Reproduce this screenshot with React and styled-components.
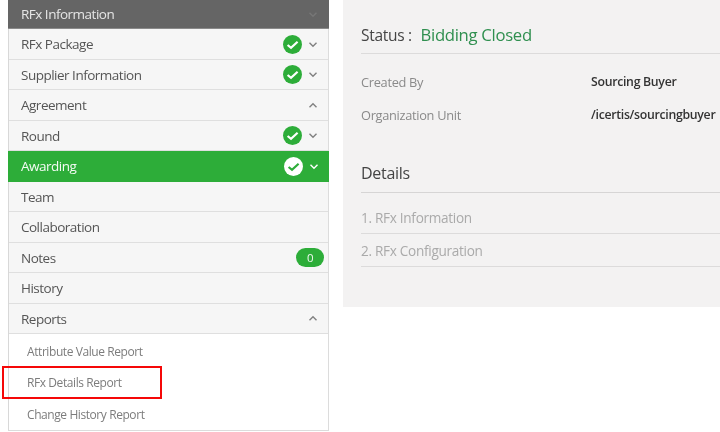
import React from 'react';
import styled, { createGlobalStyle } from 'styled-components';

const GlobalStyle = createGlobalStyle`
  html, body {
    margin: 0;
    padding: 0;
    background: #fff;
    overflow: hidden;
  }
  body {
    font-family: "Open Sans", "Noto Sans", sans-serif;
  }
`;

const Page = styled.div`
  width: 720px;
  height: 432px;
  display: flex;
  align-items: flex-start;
  overflow: hidden;
  padding-left: 8px;
  box-sizing: border-box;
  filter: blur(0.4px);
`;

const Sidebar = styled.div`
  position: relative;
  width: 322px;
  box-sizing: border-box;
  border: 1px solid #dcdcdc;
  border-top: none;
  border-left-color: #d8d8d8;
  background: #fff;
`;

const Header = styled.div`
  height: 28px;
  margin: 0 -1px;
  padding: 0 8px 0 13px;
  background: #656565;
  color: #e6e6e6;
  font-size: 13.5px;
  letter-spacing: -0.5px;
  display: flex;
  align-items: center;
  justify-content: space-between;
  border-bottom: 1px solid #8a8a8a;
`;

const Row = styled.div`
  height: 30.5px;
  box-sizing: border-box;
  padding: 1px 7px 0 12px;
  display: flex;
  align-items: center;
  font-size: 13.5px;
  letter-spacing: -0.5px;
  color: ${p => (p.$active ? '#f4fbf4' : '#555')};
  background: ${p => (p.$active ? '#2dad39' : '#f6f6f6')};
  border-bottom: 1px solid ${p => (p.$active ? '#2dad39' : '#dfdfdf')};
  margin: ${p => (p.$active ? '0 -1px' : '0')};
  padding-left: ${p => (p.$active ? '13px' : '12px')};
`;

const Label = styled.span`
  flex: 1;
`;

const Check = styled.svg`
  width: 19px;
  height: 19px;
  flex: none;
`;

const Chevron = styled.svg`
  width: 10px;
  height: 7px;
  flex: none;
  margin-left: 6px;
  margin-right: 3px;
`;

const Badge = styled.span`
  width: 28px;
  height: 19px;
  border-radius: 10px;
  background: #2dad39;
  color: #f0f8f0;
  font-size: 11.5px;
  display: flex;
  align-items: center;
  justify-content: center;
  margin-right: -3px;
`;

const SubList = styled.div`
  background: #fff;
  padding: 1px 0 0;
`;

const SubItem = styled.div`
  height: 31.6px;
  padding-left: 18px;
  padding-top: 1px;
  box-sizing: border-box;
  display: flex;
  align-items: center;
  font-size: 12px;
  color: #7c7c7c;
  letter-spacing: -0.42px;
`;

const Highlight = styled.div`
  position: absolute;
  left: -7px;
  top: 366px;
  width: 156px;
  height: 29px;
  border: 2px solid #f50808;
`;

const Panel = styled.div`
  width: 377px;
  height: 307px;
  flex: none;
  margin-left: 14px;
  background: #f3f2f2;
  box-sizing: border-box;
  padding: 24px 0 0 18px;
`;

const StatusLine = styled.div`
  height: 29px;
  font-size: 15.5px;
  letter-spacing: -0.3px;
  color: #444;
  border-bottom: 1px solid #dcdbdb;
  line-height: 22px;
`;

const StatusValue = styled.span`
  color: #2f8f4f;
  font-size: 16.7px;
  margin-left: 5px;
`;

const Field = styled.div`
  display: flex;
  height: 33px;
  align-items: center;
  font-size: 12.8px;
  letter-spacing: -0.3px;
`;

const FieldName = styled.span`
  width: 230px;
  color: #8a8a8a;
`;

const FieldValue = styled.span`
  color: #333;
  font-weight: 600;
  font-size: 12.3px;
`;

const Fields = styled.div`
  padding-top: 11px;
`;

const SectionTitle = styled.div`
  margin-top: 31px;
  margin-bottom: 8px;
  height: 30px;
  font-size: 16px;
  letter-spacing: -0.3px;
  color: #444;
  border-bottom: 1px solid #d6d5d5;
  line-height: 22px;
`;

const Step = styled.div`
  height: 33px;
  box-sizing: border-box;
  padding-top: 7px;
  font-size: 13.6px;
  letter-spacing: -0.3px;
  color: #aaa;
  border-bottom: 1px solid #dcdbdb;
`;

const CheckIcon = ({ inverted }) => (
  <Check viewBox="0 0 19 19">
    <circle cx="9.5" cy="9.5" r="9.5" fill={inverted ? '#fff' : '#2dad39'} />
    <path
      d="M4.6 10 L8 12.8 L14.6 6.8"
      fill="none"
      stroke={inverted ? '#2dad39' : '#fff'}
      strokeWidth="2.2"
    />
  </Check>
);

const ChevronIcon = ({ up, color = '#808080' }) => (
  <Chevron viewBox="0 0 10 7">
    <path
      d={up ? 'M1.5 5.2 L5 1.7 L8.5 5.2' : 'M1.5 1.7 L5 5.2 L8.5 1.7'}
      fill="none"
      stroke={color}
      strokeWidth="1.4"
    />
  </Chevron>
);

const rows = [
  { label: 'RFx Package', done: true, chevron: 'down' },
  { label: 'Supplier Information', done: true, chevron: 'down' },
  { label: 'Agreement', chevron: 'up' },
  { label: 'Round', done: true, chevron: 'down' },
  { label: 'Awarding', done: true, chevron: 'down', active: true },
  { label: 'Team' },
  { label: 'Collaboration' },
  { label: 'Notes', badge: 0 },
  { label: 'History' },
  { label: 'Reports', chevron: 'up' },
];

const reports = ['Attribute Value Report', 'RFx Details Report', 'Change History Report'];

const App = () => (
  <>
    <GlobalStyle />
    <Page>
      <Sidebar>
        <Header>
          <span>RFx Information</span>
          <ChevronIcon color="#777" />
        </Header>
        {rows.map(row => (
          <Row key={row.label} $active={row.active}>
            <Label>{row.label}</Label>
            {row.done && <CheckIcon inverted={row.active} />}
            {row.chevron && (
              <ChevronIcon up={row.chevron === 'up'} color={row.active ? '#fff' : '#808080'} />
            )}
            {row.badge !== undefined && <Badge>{row.badge}</Badge>}
          </Row>
        ))}
        <SubList>
          {reports.map(name => (
            <SubItem key={name}>{name}</SubItem>
          ))}
        </SubList>
        <Highlight />
      </Sidebar>
      <Panel>
        <StatusLine>
          Status : <StatusValue>Bidding Closed</StatusValue>
        </StatusLine>
        <Fields>
          <Field>
            <FieldName>Created By</FieldName>
            <FieldValue>Sourcing Buyer</FieldValue>
          </Field>
          <Field>
            <FieldName>Organization Unit</FieldName>
            <FieldValue>/icertis/sourcingbuyer</FieldValue>
          </Field>
        </Fields>
        <SectionTitle>Details</SectionTitle>
        <Step>1. RFx Information</Step>
        <Step>2. RFx Configuration</Step>
      </Panel>
    </Page>
  </>
);

export default App;
